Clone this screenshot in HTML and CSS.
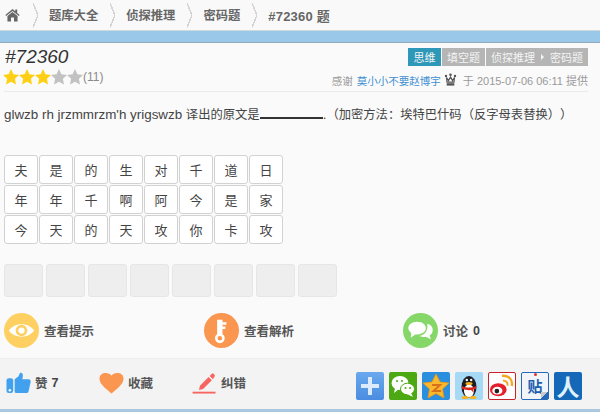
FILE: index.html
```html
<!DOCTYPE html>
<html lang="zh">
<head>
    <meta charset="UTF-8">
    <title>#72360 题</title>
    <link rel="stylesheet" href="styles.css">
</head>
<body>
    <nav class="crumbs">
        <svg class="home" viewBox="0 0 16 14"><path d="M8 0.5 L11 3 V1 H13 V4.8 L15.6 7 L14.8 8 L8 2.6 L1.2 8 L0.4 7 Z M2.6 8 L8 3.8 L13.4 8 V14 H9.6 V9.6 H6.4 V14 H2.6 Z" fill="#666"/></svg>
        <span class="sep"></span>
        <a class="crumb">题库大全</a>
        <span class="sep"></span>
        <a class="crumb">侦探推理</a>
        <span class="sep"></span>
        <a class="crumb">密码题</a>
        <span class="sep"></span>
        <a class="crumb crumb-last">#72360 题</a>
    </nav>
    <div class="band"></div>

    <main class="content">
        <header class="head">
            <div class="head-left">
                <h1 class="qid">#72360</h1>
                <div class="rating">
                    <svg class="star on" viewBox="0 0 16 16"><path d="M8 0 L10.4 5.2 L16 5.9 L11.9 9.8 L13 15.6 L8 12.7 L3 15.6 L4.1 9.8 L0 5.9 L5.6 5.2 Z"/></svg>
                    <svg class="star on" viewBox="0 0 16 16"><path d="M8 0 L10.4 5.2 L16 5.9 L11.9 9.8 L13 15.6 L8 12.7 L3 15.6 L4.1 9.8 L0 5.9 L5.6 5.2 Z"/></svg>
                    <svg class="star on" viewBox="0 0 16 16"><path d="M8 0 L10.4 5.2 L16 5.9 L11.9 9.8 L13 15.6 L8 12.7 L3 15.6 L4.1 9.8 L0 5.9 L5.6 5.2 Z"/></svg>
                    <svg class="star" viewBox="0 0 16 16"><path d="M8 0 L10.4 5.2 L16 5.9 L11.9 9.8 L13 15.6 L8 12.7 L3 15.6 L4.1 9.8 L0 5.9 L5.6 5.2 Z"/></svg>
                    <svg class="star" viewBox="0 0 16 16"><path d="M8 0 L10.4 5.2 L16 5.9 L11.9 9.8 L13 15.6 L8 12.7 L3 15.6 L4.1 9.8 L0 5.9 L5.6 5.2 Z"/></svg>
                    <span class="count">(11)</span>
                </div>
            </div>
            <div class="head-right">
                <div class="tags">
                    <span class="tag tag-blue">思维</span>
                    <span class="tag">填空题</span>
                    <span class="tag">侦探推理<i class="tag-arrow"></i>密码题</span>
                </div>
                <div class="credit">
                    <span>感谢</span>
                    <a class="user">莫小小不要赵博宇</a>
                    <svg class="crown" viewBox="0 0 12 13"><path d="M2 4.500 L4 7.500 L6 4 L8 7.500 L10 4.500 L9.500 9.200 H2.500 Z" fill="#fff" stroke="#555" stroke-width="1.200"/><rect x="2.200" y="10.200" width="7.600" height="2.400" fill="#555"/><circle cx="6" cy="1.800" r="1.300" fill="#555"/><circle cx="1.500" cy="3" r="1.200" fill="#555"/><circle cx="10.500" cy="3" r="1.200" fill="#555"/></svg>
                    <span class="credit-date">于 2015-07-06 06:11 提供</span>
                </div>
            </div>
        </header>

        <p class="question">glwzb rh jrzmmrzm'h yrigswzb <span class="question-cn">译出的原文是</span><span class="blank"></span>.<span class="question-cn">（加密方法：埃特巴什码（反字母表替换））</span></p>

        <div class="letters">
            <span class="letter">夫</span><span class="letter">是</span><span class="letter">的</span><span class="letter">生</span><span class="letter">对</span><span class="letter">千</span><span class="letter">道</span><span class="letter">日</span>
            <span class="letter">年</span><span class="letter">年</span><span class="letter">千</span><span class="letter">啊</span><span class="letter">阿</span><span class="letter">今</span><span class="letter">是</span><span class="letter">家</span>
            <span class="letter">今</span><span class="letter">天</span><span class="letter">的</span><span class="letter">天</span><span class="letter">攻</span><span class="letter">你</span><span class="letter">卡</span><span class="letter">攻</span>
        </div>

        <div class="answer">
            <span class="slot"></span><span class="slot"></span><span class="slot"></span><span class="slot"></span>
            <span class="slot"></span><span class="slot"></span><span class="slot"></span><span class="slot"></span>
        </div>

        <div class="actions">
            <a class="action action-hint">
                <span class="circle circle-yellow">
                    <svg viewBox="0 0 36 36"><path d="M5 18 C11 9.500 25 9.500 31 18 C25 26.500 11 26.500 5 18 Z" fill="#fff"/><circle cx="18" cy="18" r="6" fill="#fed061"/><circle cx="18" cy="18" r="3.200" fill="#fff"/></svg>
                </span>
                查看提示
            </a>
            <a class="action action-key">
                <span class="circle circle-orange">
                    <svg viewBox="0 0 36 36"><path d="M13.500 7 H19 V9.500 H23 V12 H19 V14 H22 V16.500 H19 V22 H13.500 Z" fill="#fff"/><circle cx="16.300" cy="26" r="3.700" fill="none" stroke="#fff" stroke-width="2.600"/></svg>
                </span>
                查看解析
            </a>
            <a class="action action-talk">
                <span class="circle circle-green">
                    <svg viewBox="0 0 36 36"><path d="M25 11 C29 12 31 15 30.500 18.500 C30 21 28.500 22.500 27.500 23 L28.500 27 L23.500 24.500 C20.500 25 18 24.500 16.500 23.500 C21.500 23.500 26 19 25 11 Z" fill="#fff"/><path d="M14.500 9 C20 9 23.500 12 23.500 15.500 C23.500 19 20 22 14.500 22 L12.500 22 L8 25.500 L8.500 20.500 C6.500 19 5.500 17.500 5.500 15.500 C5.500 12 9.500 9 14.500 9 Z" fill="#fff"/></svg>
                </span>
                讨论 <b class="num">0</b>
            </a>
        </div>
    </main>

    <footer class="bottom">
        <div class="tools">
            <a class="tool tool-like">
                <svg viewBox="0 0 26 22"><rect x="0.500" y="6" width="7" height="15.500" rx="2.500" fill="#42a1ee"/><path d="M9 7 L13 4 L14.500 0.500 C16.500 0 18 1.500 17.500 4 L17 7 H23.500 C25.500 7 26 9 25.500 10.500 L23.500 19.500 C23 21 22 21.500 20.500 21.500 H11 C9.500 21.500 9 20.500 9 19.500 Z" fill="#42a1ee"/><circle cx="4" cy="18.500" r="1.300" fill="#fff"/></svg>
                赞 <b class="num">7</b>
            </a>
            <a class="tool tool-fav">
                <svg viewBox="0 0 26 22"><path d="M13 22 C9 18 1 13 0.500 7 C0.300 2.500 3.500 0.500 7 0.500 C9.500 0.500 12 1.500 13 3.500 C14 1.500 16.500 0.500 19 0.500 C22.500 0.500 25.700 2.500 25.500 7 C25 13 17 18 13 22 Z" fill="#fb9651"/></svg>
                收藏
            </a>
            <a class="tool tool-fix">
                <svg viewBox="0 0 26 24"><path d="M8 15 L17.500 5.500 L21 9 L11.500 18.500 L7 19.500 Z M18.700 4.300 L21 2 C22 1.300 22.500 1.500 23 2 L24 3.300 C24.500 4 24.500 4.500 23.800 5.300 L22.200 7.800 Z" fill="#f6655f"/><rect x="0" y="21.500" width="25" height="2" fill="#f6655f"/></svg>
                纠错
            </a>
        </div>
        <div class="shares">
            <span class="share share-plus"><svg viewBox="0 0 28 28"><rect x="12" y="5" width="4" height="18" fill="#dbeafc"/><rect x="5" y="12" width="18" height="4" fill="#dbeafc"/></svg></span>
            <span class="share share-wechat"><svg viewBox="0 0 28 28"><ellipse cx="11" cy="11" rx="8.500" ry="7" fill="#fff"/><path d="M6 16 L5 21 L10 17 Z" fill="#fff"/><ellipse cx="18.500" cy="17" rx="7" ry="5.800" fill="#fff" stroke="#4ca813" stroke-width="1"/><path d="M22 21 L24 25 L18 22 Z" fill="#fff"/><circle cx="16.500" cy="16" r="1" fill="#4ca813"/><circle cx="21" cy="16" r="1" fill="#4ca813"/><circle cx="8" cy="9" r="1" fill="#4ca813"/><circle cx="13" cy="9" r="1" fill="#4ca813"/></svg></span>
            <span class="share share-qzone"><svg viewBox="0 0 28 28"><path d="M14 2 L18 10 L27 11 L20.500 17 L22 26 L14 21.500 L6 26 L7.500 17 L1 11 L10 10 Z" fill="#fbb82c" stroke="#e89712" stroke-width="0.800"/><path d="M10 13 H18 L11.500 19 H19" fill="none" stroke="#d8711c" stroke-width="2"/></svg></span>
            <span class="share share-qq"><svg viewBox="0 0 28 28"><ellipse cx="14" cy="15" rx="7.500" ry="11" fill="#1c1c22"/><ellipse cx="14" cy="19" rx="5" ry="6.500" fill="#fff"/><path d="M7 14 C11 16 17 16 21 14 L21 17 L18 17.500 L19 21 L16 18 C13 18.500 10 17.500 7 17 Z" fill="#d9261c"/><ellipse cx="14" cy="11.500" rx="3.500" ry="1.500" fill="#f6b31d"/><circle cx="11.800" cy="8" r="1.200" fill="#fff"/><circle cx="16.200" cy="8" r="1.200" fill="#fff"/><ellipse cx="10" cy="25.500" rx="3.500" ry="1.500" fill="#f6b31d"/><ellipse cx="18" cy="25.500" rx="3.500" ry="1.500" fill="#f6b31d"/></svg></span>
            <span class="share share-weibo"><svg viewBox="0 0 28 28"><ellipse cx="10" cy="18" rx="9" ry="7" fill="#e3202b"/><ellipse cx="9" cy="19" rx="5.500" ry="4.200" fill="#fff"/><circle cx="8.500" cy="19.500" r="2.500" fill="#222"/><path d="M14 3 C21 2.500 26 7 24.500 14" fill="none" stroke="#f5a623" stroke-width="2.500"/><path d="M15 8 C18 8 20.500 10 20 13.500" fill="none" stroke="#f5a623" stroke-width="2.200"/></svg></span>
            <span class="share share-tieba">贴<i class="tieba-pin"></i><i class="tieba-fold"></i></span>
            <span class="share share-renren">人</span>
        </div>
    </footer>
    <div class="bottom-strip"></div>
</body>
</html>
```

FILE: styles.css
```css
* {
    box-sizing: border-box;
}

body {
    margin: 0;
    height: 412px;
    overflow: hidden;
    background: #fafafa;
    color: #444;
    font-family: "Liberation Sans", "Noto Sans CJK SC", sans-serif;
    font-size: 12px;
    text-spacing-trim: space-all;
}

/* top breadcrumb */
.crumbs {
    display: flex;
    align-items: center;
    height: 30px;
    padding-left: 5px;
    background: #f9f9f9;
}

.home {
    width: 15px;
    height: 14px;
    margin-right: 13px;
}

.sep {
    width: 5px;
    height: 25px;
    background: linear-gradient(to top right, transparent 42%, #d4d4d4 42%, #d4d4d4 58%, transparent 58%) top / 100% 50% no-repeat,
        linear-gradient(to bottom right, transparent 42%, #d4d4d4 42%, #d4d4d4 58%, transparent 58%) bottom / 100% 50% no-repeat;
}

.crumb {
    margin: 0 12px 0 11px;
    color: #666;
    font-size: 12.300px;
    font-weight: bold;
}

.crumb-last {
    font-size: 13px;
    letter-spacing: 0.2px;
}

.band {
    height: 13px;
    background: #9ac8e8;
    border-top: 1px solid #d0d8dc;
    border-bottom: 1px solid #94aab8;
}

.content {
    height: 315px;
}

/* title, rating and tags */
.head {
    display: flex;
    justify-content: space-between;
    height: 49px;
    margin: 0 12px 0 4px;
    border-bottom: 1px solid #eaeaea;
}

.qid {
    margin: 4px 0 0 1px;
    color: #333;
    font-size: 19px;
    line-height: 20px;
    font-weight: normal;
    font-style: italic;
}

.rating {
    display: flex;
    align-items: center;
    margin: 2px 0 0 -1px;
}

.star {
    width: 16px;
    height: 16px;
    fill: #c2c2c2;
}

.star.on {
    fill: #ffd012;
}

.count {
    color: #8a8a8a;
    font-size: 12px;
}

.head-right {
    display: flex;
    flex-direction: column;
    align-items: flex-end;
}

.tags {
    display: flex;
    gap: 1px;
    margin-top: 5px;
}

.tag {
    display: flex;
    align-items: center;
    height: 18px;
    padding: 0 5px;
    background: #b5b5b5;
    color: #f4f4f4;
    font-size: 11px;
}

.tag-blue {
    padding: 0 5.500px;
    background: #2d98b8;
}

.tag-arrow {
    width: 0;
    height: 0;
    margin: 0 6px;
    border-left: 3px solid #f4f4f4;
    border-top: 3px solid transparent;
    border-bottom: 3px solid transparent;
}

.credit {
    display: flex;
    align-items: center;
    margin-top: 6px;
    color: #999;
    font-size: 10.500px;
}

.credit-date {
    font-size: 11px;
}

.user {
    margin-left: 4px;
    color: #3f8fd2;
}

.crown {
    width: 13px;
    height: 13px;
    margin: 0 6px 2px 3px;
}

.question {
    height: 17px;
    margin: 14px 0 0 4px;
    color: #444;
    font-size: 13.400px;
    line-height: 17px;
    white-space: nowrap;
}

.question-cn {
    font-size: 12.300px;
}

.blank {
    display: inline-block;
    width: 63px;
    border-bottom: 2px solid #333;
}

/* letter grid and answer slots */
.letters {
    display: grid;
    grid-template-columns: repeat(8, 34px);
    grid-auto-rows: 29px;
    gap: 1px;
    width: max-content;
    margin: 32px 0 0 4px;
}

.letter {
    display: flex;
    align-items: center;
    justify-content: center;
    background: #fff;
    border: 1px solid #d2d2d2;
    border-radius: 3px;
    color: #444;
    font-size: 13px;
}

.answer {
    display: flex;
    gap: 3px;
    margin: 20px 0 0 4px;
}

.slot {
    width: 39px;
    height: 33px;
    background: #eee;
    border: 1px solid #e6e6e6;
    border-radius: 3px;
}

/* hint, analysis and discussion */
.actions {
    display: flex;
    margin: 16px 0 0 4px;
}

.action {
    display: flex;
    flex: none;
    align-items: center;
    gap: 5px;
    width: 200px;
    color: #555;
    font-size: 12.500px;
    font-weight: bold;
}

.action-key {
    width: 199px;
}

.circle {
    display: block;
    width: 35px;
    height: 35px;
    border-radius: 50%;
}

.circle svg {
    display: block;
    width: 100%;
    height: 100%;
}

.circle-yellow {
    background: #fed061;
}

.circle-orange {
    background: #fb9651;
}

.circle-green {
    background: #85d868;
}

.num {
    color: #444;
    font-size: 12.500px;
}

/* bottom bar */
.bottom {
    display: flex;
    justify-content: space-between;
    align-items: center;
    height: 51px;
    padding: 0 18px 0 6px;
    background: #f3f3f3;
    border-top: 1px solid #eee;
}

.tools {
    display: flex;
    margin-bottom: 3px;
}

.tool {
    display: flex;
    align-items: center;
    gap: 4px;
    width: 93px;
    color: #555;
    font-size: 12.500px;
    font-weight: bold;
}

.tool svg {
    width: 25px;
    height: 22px;
}

.shares {
    display: flex;
    gap: 5px;
    margin-top: 3px;
}

.share {
    position: relative;
    display: flex;
    align-items: center;
    justify-content: center;
    width: 28px;
    height: 28px;
    border-radius: 2px;
}

.share svg {
    width: 28px;
    height: 28px;
}

.share-plus {
    background: linear-gradient(#6aa9ee, #4a8ce0);
}

.share-wechat {
    background: #4ca813;
}

.share-qzone {
    background: #2a8fdf;
}

.share-qq {
    background: #a5d9f5;
}

.share-weibo {
    background: #fff;
    border: 1px solid #c8232b;
}

.share-tieba {
    background: #f1f4f9;
    border: 1px solid #2469ba;
    color: #1d5fae;
    font-size: 15px;
    font-weight: bold;
}

.tieba-pin {
    position: absolute;
    top: 0;
    left: 12px;
    width: 3px;
    height: 3px;
    border-radius: 50%;
    background: #d9342b;
}

.tieba-fold {
    position: absolute;
    right: 0;
    bottom: 0;
    width: 7px;
    height: 7px;
    background: linear-gradient(135deg, #c9c9c9 50%, #2469ba 50%);
}

.share-renren {
    background: #1568b8;
    color: #dff1fb;
    font-size: 23px;
    font-weight: bold;
}

.bottom-strip {
    height: 3px;
    background: #a9c8df;
}
```
